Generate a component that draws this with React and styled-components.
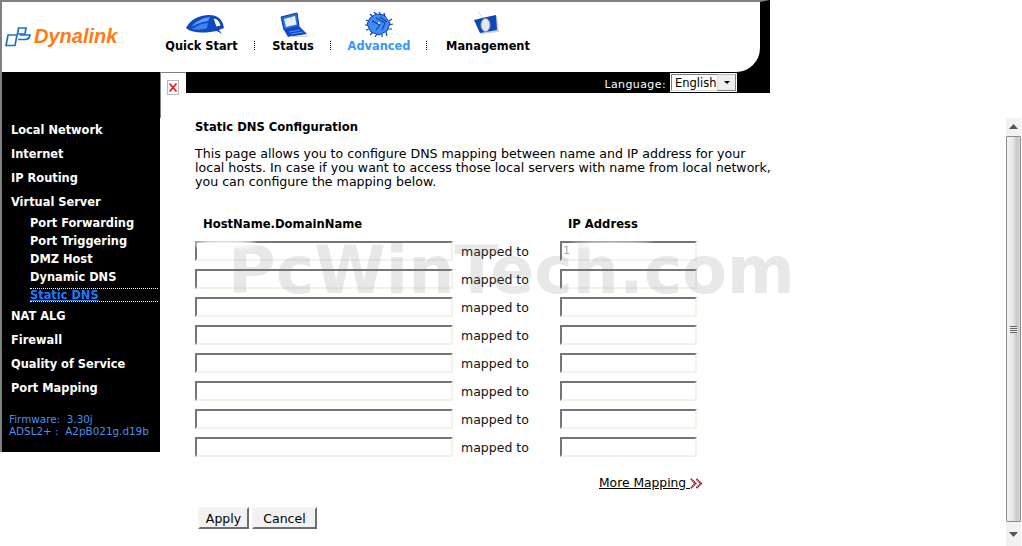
import React from "react";
import styled, { createGlobalStyle } from "styled-components";

const GlobalStyle = createGlobalStyle`
  html, body {
    margin: 0;
    height: 100%;
    overflow: hidden;
    background: #fff;
  }
  body {
    font-family: "DejaVu Sans", Verdana, sans-serif;
    font-size: 12.5px;
    color: #000;
  }
`;

const Page = styled.div`
  position: relative;
  display: flex;
  width: 1022px;
  height: 546px;
  overflow: hidden;
`;

const Frame = styled.div`
  width: 770px;
  flex: none;
`;

const TopBar = styled.header`
  display: flex;
  height: 70px;
  box-sizing: content-box;
  border-top: 2px solid #808080;
  border-left: 2px solid #808080;
  border-right: 10px solid #000;
  background: #000;
`;

const TopInner = styled.div`
  flex: 1;
  display: flex;
  background: #fff;
  border-bottom-right-radius: 24px;
`;

const LogoBox = styled.div`
  width: 147px;
  flex: none;
  display: flex;
  align-items: center;
  gap: 3px;
  padding: 0 0 1px 3px;
  box-sizing: border-box;
`;

const LogoText = styled.span`
  font-family: "Liberation Sans", Arial, sans-serif;
  font-size: 20px;
  font-weight: bold;
  font-style: italic;
  color: #ff7a12;
`;

const Nav = styled.nav`
  display: flex;
  align-items: flex-start;
  padding-top: 10px;
`;

const NavItem = styled.a`
  width: ${(p) => p.$w}px;
  display: flex;
  flex-direction: column;
  align-items: center;
  font-size: 11.4px;
  font-weight: bold;
  line-height: 14px;
  gap: 2px;
  color: ${(p) => (p.$active ? "#3399ff" : "#000")};
`;

const IconSlot = styled.span`
  height: 25px;
  display: block;
`;

const NavSep = styled.span`
  width: 1px;
  height: 9px;
  margin-top: 29px;
  flex: none;
  border-left: 1px dotted #000;
`;

const Body = styled.div`
  display: flex;
`;

const Sidebar = styled.aside`
  width: 160px;
  height: 380px;
  flex: none;
  background: #000;
  border-left: 2px solid #808080;
  padding-top: 46px;
  box-sizing: border-box;
`;

const MenuItem = styled.a`
  display: block;
  height: 24px;
  line-height: 24px;
  padding-left: 9px;
  font-size: 11.4px;
  font-weight: bold;
  color: #fff;
`;

const SubItem = styled.a`
  display: block;
  height: ${(p) => (p.$current ? "12px" : "18px")};
  line-height: ${(p) => (p.$current ? "12px" : "18px")};
  margin: ${(p) => (p.$current ? "2px 2px 2px 28px" : "0 0 0 28px")};
  font-size: 11.4px;
  font-weight: bold;
  color: ${(p) => (p.$current ? "#1a7dff" : "#fff")};
  border-top: ${(p) => (p.$current ? "1px dotted #fff" : "none")};
  border-bottom: ${(p) => (p.$current ? "1px dotted #fff" : "none")};
  text-decoration: ${(p) => (p.$current ? "underline" : "none")};
`;

const SubList = styled.div`
  margin-bottom: 1px;
`;

const Version = styled.div`
  margin-top: 13px;
  padding-left: 7px;
  font-size: 10.4px;
  line-height: 12px;
  color: #4d8ff0;
`;

const Main = styled.div`
  flex: 1;
  min-width: 0;
`;

const CollapseStrip = styled.div`
  display: flex;
`;

const CollapseCell = styled.div`
  width: 26px;
  height: 46px;
  flex: none;
  border-top: 1px solid #808080;
  border-left: 1px solid #808080;
  padding: 7px 0 0 6px;
  box-sizing: border-box;
`;

const CloseBox = styled.div`
  width: 12px;
  height: 15px;
  box-sizing: border-box;
  border: 1px solid #bbb;
  display: flex;
  align-items: center;
  justify-content: center;
`;

const LangBar = styled.div`
  flex: 1;
  height: 21px;
  background: #000;
  display: flex;
  justify-content: flex-end;
  align-items: center;
  padding-right: 33px;
  gap: 4px;
`;

const LangLabel = styled.span`
  color: #fff;
  font-size: 11px;
  padding-top: 3px;
  letter-spacing: 0.4px;
`;

const LangSelect = styled.div`
  width: 67px;
  height: 19px;
  box-sizing: border-box;
  background: #fff;
  border: 1px solid #fff;
  display: flex;
  align-items: stretch;
  font-size: 11.5px;
`;

const LangValue = styled.div`
  flex: 1;
  border: 1px solid #808080;
  border-right: none;
  border-bottom-color: #ddd;
  line-height: 17px;
  padding-left: 3px;
  color: #000;
`;

const LangArrow = styled.div`
  width: 17px;
  background: #eee;
  border: 1px solid #808080;
  border-top-color: #bbb;
  border-left-color: #ddd;
  display: flex;
  align-items: center;
  justify-content: center;
  &::after {
    content: "";
    border: 3px solid transparent;
    border-top: 3px solid #000;
    border-bottom: none;
  }
`;

const Content = styled.main`
  margin-top: 2px;
  padding-left: 35px;
`;

const Title = styled.h1`
  margin: 0 0 13px;
  font-size: 11.6px;
  line-height: 14px;
  font-weight: bold;
`;

const Intro = styled.p`
  margin: 0 0 28px;
  width: 590px;
  font-size: 12.6px;
  line-height: 14px;
`;

const HeadRow = styled.div`
  display: flex;
  font-size: 11.6px;
  font-weight: bold;
  line-height: 14px;
  margin-bottom: 10px;
`;

const HeadCell = styled.div`
  width: ${(p) => p.$w}px;
  padding-left: ${(p) => p.$pad}px;
  box-sizing: border-box;
`;

const MapRows = styled.div`
  display: flex;
  flex-direction: column;
  gap: 8px;
`;

const MapRow = styled.div`
  display: flex;
  align-items: center;
  height: 20px;
`;

const TextField = styled.div`
  width: ${(p) => p.$w}px;
  height: 20px;
  flex: none;
  box-sizing: border-box;
  border: 2px solid;
  border-color: #767676 #f2f2e6 #f2f2e6 #767676;
  background: #fff;
  font-size: 11px;
  color: #aaa;
  line-height: 16px;
  padding-left: 1px;
`;

const MappedTo = styled.span`
  width: 107px;
  flex: none;
  padding-left: 8px;
  box-sizing: border-box;
  font-size: 12.5px;
  color: #111;
`;

const MoreRow = styled.div`
  display: flex;
  align-items: center;
  margin: 19px 0 0 404px;
  font-size: 12.3px;
  line-height: 14px;
`;

const MoreLink = styled.a`
  text-decoration: underline;
  color: #000;
  white-space: pre;
`;

const Actions = styled.div`
  display: flex;
  gap: 3px;
  margin: 17px 0 0 3px;
`;

const Button = styled.button`
  height: 22px;
  width: ${(p) => p.$w}px;
  padding: 0;
  box-sizing: border-box;
  font-family: inherit;
  font-size: 12.5px;
  color: #000;
  background: #f2f2f2;
  border: 2px solid;
  border-color: #f4f4f4 #6f6f6f #6f6f6f #f4f4f4;
  border-radius: 0;
`;

const ScrollColumn = styled.div`
  position: absolute;
  top: 118px;
  right: 1px;
  bottom: 0;
  width: 15px;
  display: flex;
  flex-direction: column;
  background: #f6f6f4;
`;

const ScrollButton = styled.div`
  height: ${(p) => p.$h}px;
  flex: none;
  display: flex;
  align-items: center;
  justify-content: center;
  background: #f2f2f2;
`;

const ScrollThumb = styled.div`
  flex: 1;
  display: flex;
  align-items: center;
  justify-content: center;
  border: 1px solid #8c8c8c;
  border-radius: 1px;
  background: linear-gradient(90deg, #f2f2f2 0%, #e8e8e8 45%, #c8c8c8 75%, #d8d8d8 100%);
`;

const Grip = styled.div`
  width: 7px;
  height: 7px;
  background: repeating-linear-gradient(180deg, #666 0 1px, #eee 1px 2px);
`;

const Watermark = styled.div`
  position: absolute;
  left: 228px;
  top: 231px;
  font-family: "DejaVu Sans", Verdana, sans-serif;
  font-size: 65px;
  line-height: 80px;
  font-weight: bold;
  white-space: nowrap;
  color: rgba(120, 120, 120, 0.17);
  pointer-events: none;
`;

const Smudge = styled.div`
  position: absolute;
  left: ${(p) => p.$x}px;
  top: ${(p) => p.$y}px;
  width: ${(p) => p.$w}px;
  height: ${(p) => p.$h}px;
  background: #fff;
  border-radius: 50%;
  filter: blur(2px);
`;

const QuickStartIcon = () => (
  <svg width="46" height="25" viewBox="0 0 46 25">
    <path d="M7 16 C11 8 20 3 30 3 C37 3 42 6 44 12 L45 16 L40 18 L43 22 L38 19 C28 21 14 22 7 16Z" fill="#0d49c0" />
    <path d="M12 15 C17 9 23 6 31 5 L29 9 C23 10 17 12 12 15Z" fill="#5c9cf5" />
    <path d="M13 17 C19 13 24 11 29 11 L28 16 C23 18 18 18 13 17Z" fill="#3f82ec" />
    <path d="M34 6 C38 6 41 9 42 14 L37 15 Z" fill="#f4f6ff" stroke="#0a2f88" strokeWidth="0.8" />
  </svg>
);

const StatusIcon = () => (
  <svg width="30" height="25" viewBox="0 0 30 25">
    <path d="M6 18 L21 14 L29 22 L10 25Z" fill="#0b47d0" />
    <path d="M3 5 L19 1 L21 14 L6 18Z" fill="#1f6fe8" stroke="#0b3a9c" strokeWidth="1" />
    <path d="M6 7 L17 4 L18.5 12.5 L8 15Z" fill="#e4eeff" />
    <path d="M11 20 L22 18 M13 22 L25 20" stroke="#5f8fe0" />
    <path d="M29 22 L30 24 L11 25" stroke="#d8d2b8" fill="none" />
  </svg>
);

const AdvancedIcon = () => (
  <svg width="28" height="25" viewBox="0 0 28 25">
    <path
      d="M8 5 L5 2 M12 3 L9 0 M16 3 L14 0 M20 5 L19 1 M24 9 L27 7 M24 13 L28 12 M23 17 L27 17 M4 9 L1 8 M3 13 L0 13 M4 17 L1 18 M8 20 L5 23 M12 22 L10 25 M17 22 L17 25 M21 20 L22 24"
      stroke="#0b3fb0"
      strokeWidth="1.2"
    />
    <path d="M11 2 L19 3 L25 11 L22 19 L14 23 L6 20 L2 12 L5 6Z" fill="#3f8cf5" stroke="#0b3fb0" />
    <path d="M7 9 L15 13 L11 18 M11 6 L20 11 L17 18 M15 5 L22 10" stroke="#0b3fb0" strokeWidth="1.1" fill="none" />
    <circle cx="14" cy="11" r="1" fill="#fff" />
  </svg>
);

const ManagementIcon = () => (
  <svg width="28" height="25" viewBox="0 0 28 25">
    <path d="M1 9 L8 6 L23 4 L25 20 L7 22Z" fill="#d8d2b8" />
    <path d="M0 8 L8 6 L22 3 L23 18 L6 21Z" fill="#0a47b8" />
    <ellipse cx="11.5" cy="13" rx="4.5" ry="6.5" fill="#e4e7ee" stroke="#9aa2b5" />
    <path d="M4 0 L9 6" stroke="#c8d0e0" />
  </svg>
);

const LogoMark = () => (
  <svg width="26" height="20" viewBox="0 0 26 20" fill="none" stroke="#1c6fc8" strokeWidth="1.7">
    <path d="M3 8 L12 8 L10 18.5 L1 18.5Z" />
    <path d="M13.5 1 L21 1 L20 7 L12.5 7Z" />
    <path d="M15 8 L25 8 C24.5 10.5 23 12.5 20.5 12.5 L13 12.5" />
  </svg>
);

const CloseIcon = () => (
  <svg width="8" height="9" viewBox="0 0 8 9">
    <path d="M0.5 0.5 L7.5 8.5 M7.5 0.5 L0.5 8.5" stroke="#e62020" strokeWidth="1.7" />
  </svg>
);

const MoreArrows = () => (
  <svg width="13" height="11" viewBox="0 0 13 11" fill="none" stroke="#8f1020" strokeWidth="2">
    <path d="M1 1 L5.5 5.5 L1 10" strokeDasharray="1.4 0.5" />
    <path d="M6.5 1 L11 5.5 L6.5 10" strokeDasharray="1.4 0.5" />
  </svg>
);

const ArrowGlyph = ({ down }) => (
  <svg width="9" height="6" viewBox="0 0 9 6">
    <path d={down ? "M0 1 L9 1 L4.5 6Z" : "M0 5 L9 5 L4.5 0Z"} fill="#555" />
  </svg>
);

const navItems = [
  { label: "Quick Start", w: 105, Icon: QuickStartIcon },
  { label: "Status", w: 74, Icon: StatusIcon },
  { label: "Advanced", w: 94, Icon: AdvancedIcon, active: true },
  { label: "Management", w: 120, Icon: ManagementIcon },
];

const rows = [0, 1, 2, 3, 4, 5, 6, 7];

export default function App() {
  return (
    <Page>
      <GlobalStyle />
      <Frame>
        <TopBar>
          <TopInner>
            <LogoBox>
              <LogoMark />
              <LogoText>Dynalink</LogoText>
            </LogoBox>
            <Nav>
              {navItems.map(({ label, w, Icon, active }, i) => (
                <React.Fragment key={label}>
                  {i > 0 && <NavSep />}
                  <NavItem $w={w} $active={active}>
                    <IconSlot>
                      <Icon />
                    </IconSlot>
                    {label}
                  </NavItem>
                </React.Fragment>
              ))}
            </Nav>
          </TopInner>
        </TopBar>
        <Body>
          <Sidebar>
            <MenuItem>Local Network</MenuItem>
            <MenuItem>Internet</MenuItem>
            <MenuItem>IP Routing</MenuItem>
            <MenuItem>Virtual Server</MenuItem>
            <SubList>
              <SubItem>Port Forwarding</SubItem>
              <SubItem>Port Triggering</SubItem>
              <SubItem>DMZ Host</SubItem>
              <SubItem>Dynamic DNS</SubItem>
              <SubItem $current>Static DNS</SubItem>
            </SubList>
            <MenuItem>NAT ALG</MenuItem>
            <MenuItem>Firewall</MenuItem>
            <MenuItem>Quality of Service</MenuItem>
            <MenuItem>Port Mapping</MenuItem>
            <Version>
              Firmware: &nbsp;3.30j
              <br />
              ADSL2+ : &nbsp;A2pB021g.d19b
            </Version>
          </Sidebar>
          <Main>
            <CollapseStrip>
              <CollapseCell>
                <CloseBox>
                  <CloseIcon />
                </CloseBox>
              </CollapseCell>
              <LangBar>
                <LangLabel>Language:</LangLabel>
                <LangSelect>
                  <LangValue>English</LangValue>
                  <LangArrow />
                </LangSelect>
              </LangBar>
            </CollapseStrip>
            <Content>
              <Title>Static DNS Configuration</Title>
              <Intro>
                This page allows you to configure DNS mapping between name and IP address for your
                <br />
                local hosts. In case if you want to access those local servers with name from local network,
                <br />
                you can configure the mapping below.
              </Intro>
              <HeadRow>
                <HeadCell $w={365} $pad={8}>HostName.DomainName</HeadCell>
                <HeadCell $w={200} $pad={8}>IP Address</HeadCell>
              </HeadRow>
              <MapRows>
                {rows.map((r) => (
                  <MapRow key={r}>
                    <TextField $w={258} />
                    <MappedTo>mapped to</MappedTo>
                    <TextField $w={137}>{r === 0 ? "1" : ""}</TextField>
                  </MapRow>
                ))}
              </MapRows>
              <MoreRow>
                <MoreLink>More Mapping </MoreLink>
                <MoreArrows />
              </MoreRow>
              <Actions>
                <Button $w={51}>Apply</Button>
                <Button $w={65}>Cancel</Button>
              </Actions>
            </Content>
          </Main>
        </Body>
      </Frame>
      <ScrollColumn>
        <ScrollButton $h={18}>
          <ArrowGlyph />
        </ScrollButton>
        <ScrollThumb>
          <Grip />
        </ScrollThumb>
        <ScrollButton $h={24}>
          <ArrowGlyph down />
        </ScrollButton>
      </ScrollColumn>
      <Watermark>PcWinTech.com</Watermark>
      <Smudge $x={194} $y={240} $w={62} $h={8} />
      <Smudge $x={572} $y={242} $w={80} $h={6} />
    </Page>
  );
}
